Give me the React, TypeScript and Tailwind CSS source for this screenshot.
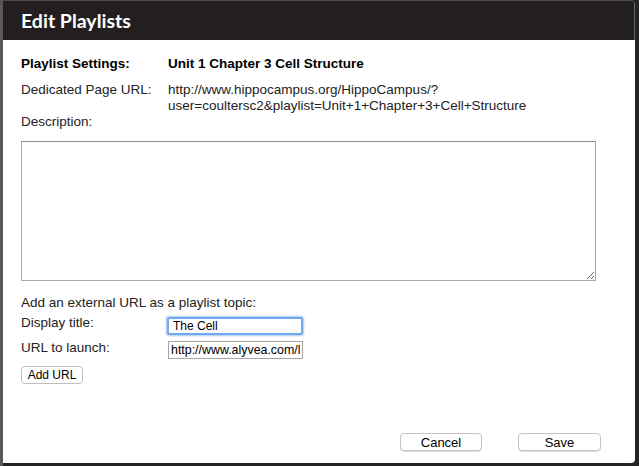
import React from "react";

export default function App() {
  const body = { fontFamily: '"Liberation Sans", Arial, sans-serif' };
  return (
    <div className="w-[639px] h-[466px] flex bg-[#232323] overflow-hidden" style={body}>
      <div className="w-[3px] h-full bg-[#595959]" />
      <div className="w-[632px] h-[463px] flex flex-col rounded-tr-[5px] rounded-br-[4px] overflow-hidden bg-white">
        <div className="h-[40px] shrink-0 bg-[#231f20] border-t border-[#4a4a4a] border-r border-r-[#6a6a6a] flex items-center pl-[18px]">
          <span
            className="text-white font-bold text-[19.5px] leading-none"
            style={{ fontFamily: 'Lato, "Open Sans", sans-serif' }}
          >
            Edit Playlists
          </span>
        </div>
        <div className="flex-1 flex flex-col pl-[18px] pt-[16px] text-[13.5px] leading-[16px] text-[#222222]">
          <div className="grid grid-cols-[147px_1fr]">
            <div className="font-bold text-black">Playlist Settings:</div>
            <div className="font-bold text-black">Unit 1 Chapter 3 Cell Structure</div>
          </div>
          <div className="grid grid-cols-[147px_1fr] mt-[10px]">
            <div>Dedicated Page URL:</div>
            <div>
              http://www.hippocampus.org/HippoCampus/?
              <br />
              user=coultersc2&amp;playlist=Unit+1+Chapter+3+Cell+Structure
            </div>
          </div>
          <div className="mt-[0px]">Description:</div>
          <textarea
            className="mt-[11px] w-[575px] h-[140px] border border-[#a9a9a9] border-t-[#8e8e8e] bg-white outline-none"
            readOnly
          />
          <div className="mt-[14px]">Add an external URL as a playlist topic:</div>
          <div className="grid grid-cols-[146px_136px]">
            <div className="pt-[4px]">Display title:</div>
            <input
              className="mt-[6px] h-[18px] w-[136px] border-2 border-[#72a8ee] rounded-[2px] shadow-[0_0_2px_1px_#a8c8f2] px-[4px] text-[12px] text-black outline-none"
              style={body}
              value="The Cell"
              readOnly
            />
          </div>
          <div className="grid grid-cols-[147px_135px]">
            <div className="pt-[5px]">URL to launch:</div>
            <input
              className="mt-[6px] h-[18px] w-[135px] border border-[#a6a6a6] px-[2px] text-[12.4px] text-black outline-none"
              style={body}
              value="http://www.alyvea.com/l"
              readOnly
            />
          </div>
          <button
            className="mt-[7px] w-[62px] h-[18px] border border-[#bdbdbd] rounded-[4px] bg-white text-[12px] leading-none text-black flex items-center justify-center"
            style={body}
          >
            Add URL
          </button>
          <div className="mt-[49px] flex justify-end pr-[34px] gap-[36px]">
            <button
              className="w-[82px] h-[18px] border border-[#c4c4c4] rounded-[4px] bg-white text-[13px] leading-none text-black flex items-center justify-center shadow-[0_1px_0_#e0e0e0]"
              style={body}
            >
              Cancel
            </button>
            <button
              className="w-[83px] h-[18px] border border-[#c4c4c4] rounded-[4px] bg-white text-[13px] leading-none text-black flex items-center justify-center shadow-[0_1px_0_#e0e0e0]"
              style={body}
            >
              Save
            </button>
          </div>
        </div>
      </div>
    </div>
  );
}
